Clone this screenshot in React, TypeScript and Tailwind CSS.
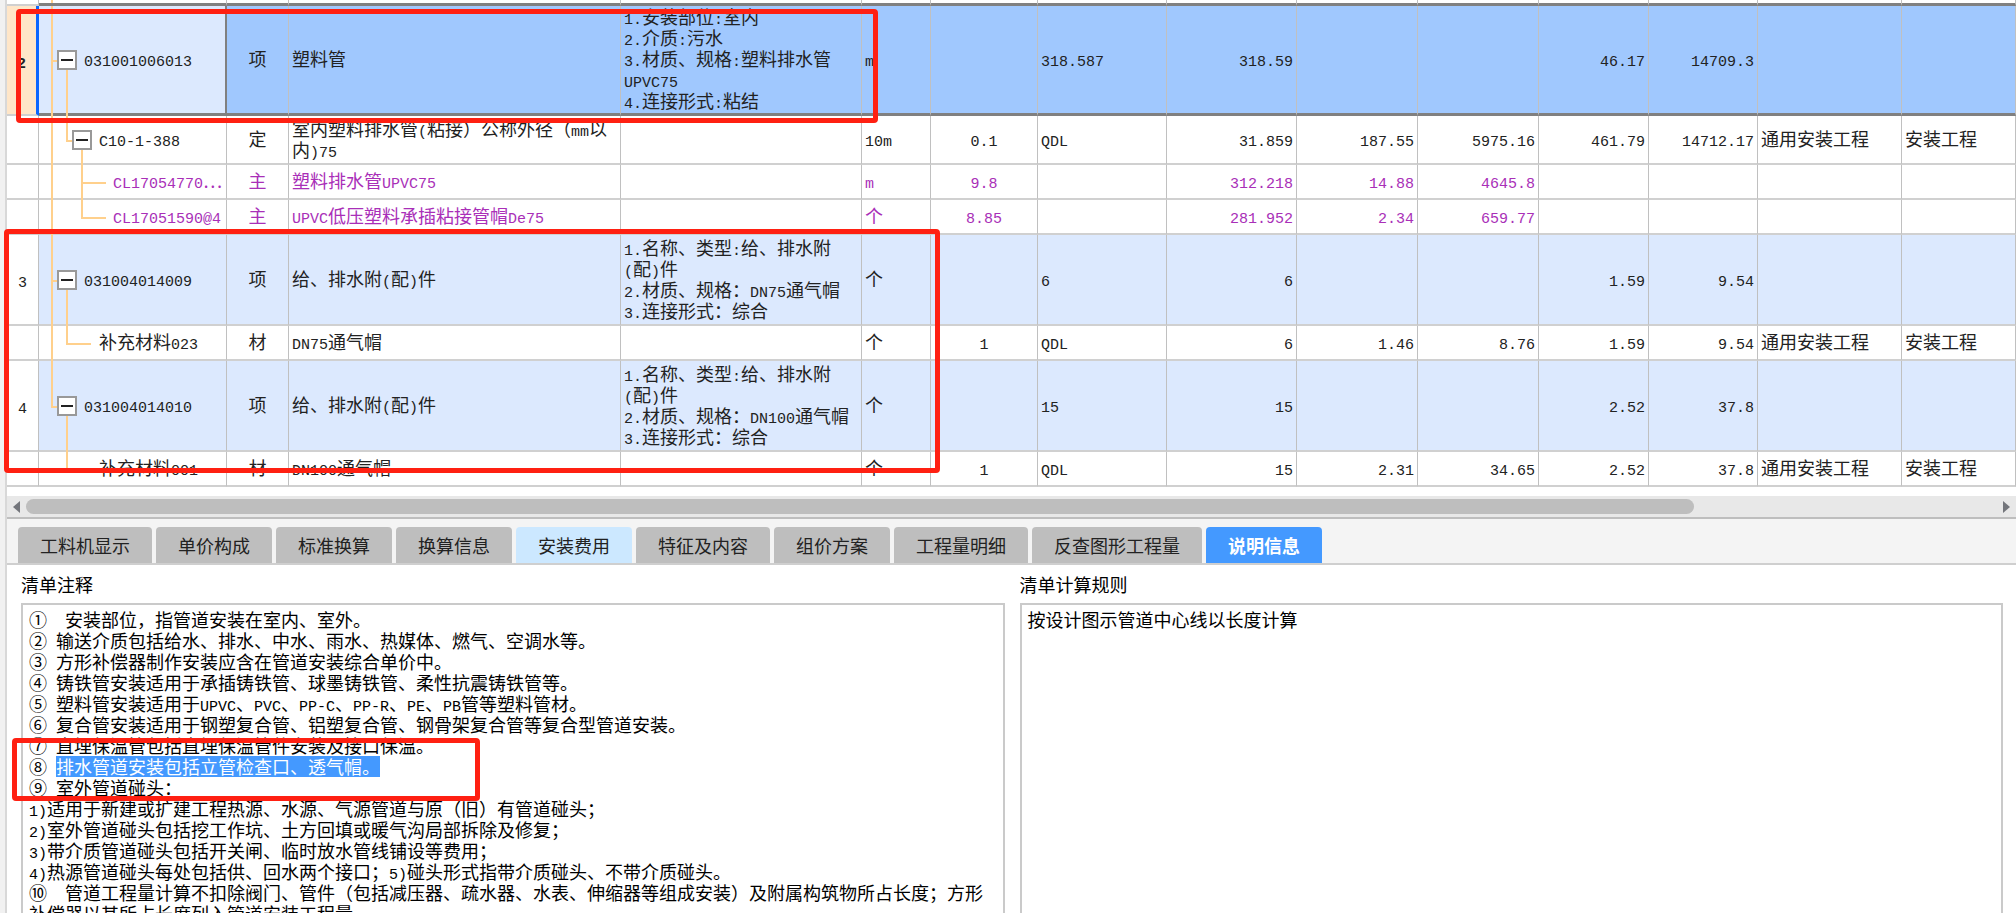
import { useState } from 'react';
import clsx from 'clsx';

type RowKind = 'selected' | 'list' | 'quota' | 'material';

interface BillRow {
  index: string;
  level: 1 | 2 | 3;
  expandable: boolean;
  code: string;
  type: string;
  name: string;
  feature: string;
  unit: string;
  content: string;
  expression: string;
  quantity: string;
  price: string;
  total: string;
  unitPrice: string;
  totalPrice: string;
  profession: string;
  category: string;
  kind: RowKind;
  height: string;
}

const rows: BillRow[] = [
  {
    index: '2', level: 1, expandable: true, code: '031001006013', type: '项', name: '塑料管',
    feature: '1.安装部位:室内\n2.介质:污水\n3.材质、规格:塑料排水管\nUPVC75\n4.连接形式:粘结',
    unit: 'm', content: '', expression: '318.587', quantity: '318.59', price: '', total: '',
    unitPrice: '46.17', totalPrice: '14709.3', profession: '', category: '', kind: 'selected', height: 'h-[110px]',
  },
  {
    index: '', level: 2, expandable: true, code: 'C10-1-388', type: '定',
    name: '室内塑料排水管(粘接）公称外径（mm以\n内)75', feature: '',
    unit: '10m', content: '0.1', expression: 'QDL', quantity: '31.859', price: '187.55', total: '5975.16',
    unitPrice: '461.79', totalPrice: '14712.17', profession: '通用安装工程', category: '安装工程', kind: 'quota', height: 'h-[49px]',
  },
  {
    index: '', level: 3, expandable: false, code: 'CL17054770⋯', type: '主', name: '塑料排水管UPVC75', feature: '',
    unit: 'm', content: '9.8', expression: '', quantity: '312.218', price: '14.88', total: '4645.8',
    unitPrice: '', totalPrice: '', profession: '', category: '', kind: 'material', height: 'h-[35px]',
  },
  {
    index: '', level: 3, expandable: false, code: 'CL17051590@4', type: '主', name: 'UPVC低压塑料承插粘接管帽De75', feature: '',
    unit: '个', content: '8.85', expression: '', quantity: '281.952', price: '2.34', total: '659.77',
    unitPrice: '', totalPrice: '', profession: '', category: '', kind: 'material', height: 'h-[35px]',
  },
  {
    index: '3', level: 1, expandable: true, code: '031004014009', type: '项', name: '给、排水附(配)件',
    feature: '1.名称、类型:给、排水附\n(配)件\n2.材质、规格：DN75通气帽\n3.连接形式：综合',
    unit: '个', content: '', expression: '6', quantity: '6', price: '', total: '',
    unitPrice: '1.59', totalPrice: '9.54', profession: '', category: '', kind: 'list', height: 'h-[91px]',
  },
  {
    index: '', level: 2, expandable: false, code: '补充材料023', type: '材', name: 'DN75通气帽', feature: '',
    unit: '个', content: '1', expression: 'QDL', quantity: '6', price: '1.46', total: '8.76',
    unitPrice: '1.59', totalPrice: '9.54', profession: '通用安装工程', category: '安装工程', kind: 'quota', height: 'h-[35px]',
  },
  {
    index: '4', level: 1, expandable: true, code: '031004014010', type: '项', name: '给、排水附(配)件',
    feature: '1.名称、类型:给、排水附\n(配)件\n2.材质、规格：DN100通气帽\n3.连接形式：综合',
    unit: '个', content: '', expression: '15', quantity: '15', price: '', total: '',
    unitPrice: '2.52', totalPrice: '37.8', profession: '', category: '', kind: 'list', height: 'h-[91px]',
  },
  {
    index: '', level: 2, expandable: false, code: '补充材料001', type: '材', name: 'DN100通气帽', feature: '',
    unit: '个', content: '1', expression: 'QDL', quantity: '15', price: '2.31', total: '34.65',
    unitPrice: '2.52', totalPrice: '37.8', profession: '通用安装工程', category: '安装工程', kind: 'quota', height: 'h-[35px]',
  },
];

const tabs = ['工料机显示', '单价构成', '标准换算', '换算信息', '安装费用', '特征及内容', '组价方案', '工程量明细', '反查图形工程量', '说明信息'];

const notes = [
  '①  安装部位，指管道安装在室内、室外。',
  '② 输送介质包括给水、排水、中水、雨水、热媒体、燃气、空调水等。',
  '③ 方形补偿器制作安装应含在管道安装综合单价中。',
  '④ 铸铁管安装适用于承插铸铁管、球墨铸铁管、柔性抗震铸铁管等。',
  '⑤ 塑料管安装适用于UPVC、PVC、PP-C、PP-R、PE、PB管等塑料管材。',
  '⑥ 复合管安装适用于钢塑复合管、铝塑复合管、钢骨架复合管等复合型管道安装。',
  '⑦ 直埋保温管包括直埋保温管件安装及接口保温。',
  '⑧ 排水管道安装包括立管检查口、透气帽。',
  '⑨ 室外管道碰头：',
  '1)适用于新建或扩建工程热源、水源、气源管道与原（旧）有管道碰头；',
  '2)室外管道碰头包括挖工作坑、土方回填或暖气沟局部拆除及修复；',
  '3)带介质管道碰头包括开关闸、临时放水管线铺设等费用；',
  '4)热源管道碰头每处包括供、回水两个接口；5)碰头形式指带介质碰头、不带介质碰头。',
  '⑩  管道工程量计算不扣除阀门、管件（包括减压器、疏水器、水表、伸缩器等组成安装）及附属构筑物所占长度；方形补偿器以其所占长度列入管道安装工程量。',
];
const selectedNote = 7;

// Half-width runs are set in a monospace face so that two of them span one CJK character
const Mixed = ({ text }: { text: string }) => (
  <>
    {text.split(/([\x20-\x7e]+)/).map((part, i) =>
      i % 2 === 1 ? (
        <span key={i} className="font-['Liberation_Mono',monospace] text-[15px] leading-[0px]">{part}</span>
      ) : (
        part
      )
    )}
  </>
);

const treeIndent = { 1: 'pl-[45px]', 2: 'pl-[60px]', 3: 'pl-[74px]' };
const toggleLeft = { 1: 'left-[18px]', 2: 'left-[33px]', 3: 'left-[48px]' };

const Line = ({ className }: { className: string }) => (
  <span className={clsx('absolute bg-[#ffd08c]', className)} />
);

const TreeCell = ({ row, position }: { row: BillRow; position: number }) => {
  const lastChild = position === 3;

  return (
    <>
      {/* trunk */}
      {position < 6 && <Line className="left-[12px] top-0 -bottom-[3px] w-[2px]" />}
      {position === 6 && <Line className="left-[12px] top-0 h-1/2 w-[2px]" />}
      {row.level === 1 && <Line className="left-[12px] top-1/2 h-[2px] w-[6px]" />}
      {row.level === 1 && <Line className="left-[27px] top-1/2 -bottom-[3px] w-[2px]" />}
      {row.level === 2 && <Line className="left-[27px] top-0 h-1/2 w-[2px]" />}
      {row.level === 2 && (
        <Line className={clsx('left-[27px] top-1/2 h-[2px]', row.expandable ? 'w-[6px]' : 'w-[25px]')} />
      )}
      {row.level === 2 && row.expandable && <Line className="left-[42px] top-1/2 -bottom-[2px] w-[2px]" />}
      {row.level === 3 && (
        <Line className={clsx('left-[42px] top-0 w-[2px]', lastChild ? 'h-1/2' : '-bottom-[2px]')} />
      )}
      {row.level === 3 && <Line className="left-[42px] top-1/2 h-[2px] w-[25px]" />}
      {row.expandable && (
        <button
          type="button"
          aria-label="折叠"
          className={clsx(
            'absolute top-1/2 flex size-5 -translate-y-1/2 items-center justify-center border-2 border-[#999] bg-white',
            toggleLeft[row.level]
          )}
        >
          <span className="h-[2px] w-3 bg-[#222]" />
        </button>
      )}
      <div className={clsx('whitespace-nowrap', treeIndent[row.level])}>
        <Mixed text={row.code} />
      </div>
    </>
  );
};

const BillTable = () => (
  <table className="w-full table-fixed border-separate border-spacing-0 text-[18px] leading-[21px] text-[#222]">
    <colgroup>
      <col className="w-[32px]" />
      <col className="w-[188px]" />
      <col className="w-[62px]" />
      <col className="w-[332px]" />
      <col className="w-[241px]" />
      <col className="w-[69px]" />
      <col className="w-[107px]" />
      <col className="w-[129px]" />
      <col className="w-[130px]" />
      <col className="w-[121px]" />
      <col className="w-[121px]" />
      <col className="w-[110px]" />
      <col className="w-[109px]" />
      <col className="w-[144px]" />
      <col />
    </colgroup>
    <tbody>
      <tr>
        {Array.from({ length: 15 }, (_, i) => (
          <td
            key={i}
            className={clsx(
              'relative h-[6px] border-r border-r-[#c0c0c0]',
              i === 0 ? 'border-b-2 border-b-[#d0d0d0]' : 'border-b-3 border-b-[#808080]'
            )}
          >
            {i === 1 && <Line className="left-[12px] top-0 bottom-0 w-[2px]" />}
          </td>
        ))}
      </tr>
      {rows.map((row, i) => {
        const selected = row.kind === 'selected';
        const cell = clsx(
          'border-r border-r-[#c0c0c0] whitespace-pre px-[3px] pb-[2px]',
          selected ? 'border-b-3 border-b-[#808080] bg-[#a0c8fe]' : 'border-b-2 border-b-[#d0d0d0]',
          row.kind === 'list' && 'bg-[#dce9fe]'
        );
        return (
          <tr key={i} className={clsx(row.kind === 'material' && 'text-[#a92fb8]')}>
            <td
              className={clsx(
                'border-b-2 border-b-[#d0d0d0] text-center',
                row.height,
                selected ? 'border-r-3 border-r-[#0a66ff] bg-[#ffe6c8] font-bold' : 'border-r border-r-[#c0c0c0]'
              )}
            >
              <Mixed text={row.index} />
            </td>
            <td
              className={clsx(
                'relative pb-[2px]',
                selected
                  ? 'border-r-2 border-b-3 border-[#808080] bg-[#dce9fe]'
                  : 'border-r border-b-2 border-r-[#c0c0c0] border-b-[#d0d0d0]',
                row.kind === 'list' && 'bg-[#dce9fe]'
              )}
            >
              <TreeCell row={row} position={i} />
            </td>
            <td className={clsx(cell, 'text-center')}>{row.type}</td>
            <td className={cell}><Mixed text={row.name} /></td>
            <td className={cell}><Mixed text={row.feature} /></td>
            <td className={cell}><Mixed text={row.unit} /></td>
            <td className={clsx(cell, 'text-center')}><Mixed text={row.content} /></td>
            <td className={cell}><Mixed text={row.expression} /></td>
            <td className={clsx(cell, 'text-right')}><Mixed text={row.quantity} /></td>
            <td className={clsx(cell, 'text-right')}><Mixed text={row.price} /></td>
            <td className={clsx(cell, 'text-right')}><Mixed text={row.total} /></td>
            <td className={clsx(cell, 'text-right')}><Mixed text={row.unitPrice} /></td>
            <td className={clsx(cell, 'text-right')}><Mixed text={row.totalPrice} /></td>
            <td className={cell}>{row.profession}</td>
            <td className={cell}>{row.category}</td>
          </tr>
        );
      })}
    </tbody>
  </table>
);

const ScrollBar = () => (
  <div className="mt-[9px] flex h-[21px] shrink-0 items-center gap-[6px] bg-[#e8e8e8] px-[6px]">
    <button type="button" aria-label="向左滚动">
      <svg width="7" height="12" viewBox="0 0 7 12"><path d="M7 0v12L0 6z" fill="#73757b" /></svg>
    </button>
    <div className="h-[15px] flex-1">
      <div className="h-full w-[calc(100%-303px)] rounded-full bg-[#bebebe]" />
    </div>
    <button type="button" aria-label="向右滚动">
      <svg width="7" height="12" viewBox="0 0 7 12"><path d="M0 0v12l7-6z" fill="#73757b" /></svg>
    </button>
  </div>
);

const Mark = ({ className }: { className: string }) => (
  <div className={clsx('pointer-events-none absolute rounded-sm border-5 border-[#ff2012]', className)} />
);

export default function App() {
  const [activeTab, setActiveTab] = useState('说明信息');

  return (
    <div className="relative flex h-screen overflow-hidden bg-white font-['Noto_Sans_CJK_SC',sans-serif]">
      <div className="w-[7px] shrink-0 border-r-2 border-[#d8d8d8] bg-[#f1f1f1]" />
      <main className="flex min-w-0 flex-1 flex-col">
        <BillTable />
        <ScrollBar />
        <div className="flex h-[48px] shrink-0 items-end gap-1 border-t-2 border-b-2 border-t-[#bebebe] border-b-[#cfcfcf] bg-[#f4f4f4] pl-[11px]">
          {tabs.map((tab) => (
            <button
              key={tab}
              type="button"
              onClick={() => setActiveTab(tab)}
              className={clsx(
                'h-9 rounded-t-sm px-[22px] text-[18px] leading-9',
                tab === activeTab
                  ? 'bg-[#4499ff] font-bold text-white'
                  : tab === '安装费用'
                    ? 'bg-[#cce8ff] text-[#222]'
                    : 'bg-[#bebebe] text-[#222]'
              )}
            >
              {tab}
            </button>
          ))}
        </div>
        <div className="grid min-h-0 flex-1 grid-cols-2 gap-[15px] pr-[13px] pl-[14px] text-[18px] leading-[21px] text-black">
          <section className="flex min-h-0 min-w-0 flex-col">
            <h2 className="py-2 leading-[22px]">清单注释</h2>
            <div className="min-h-0 flex-1 overflow-hidden border-2 border-b-0 border-[#cacaca] py-1 px-[6px] whitespace-pre-wrap">
              {notes.map((note, i) => (
                <p key={i}>
                  {i === selectedNote ? (
                    <>
                      <Mixed text={note.slice(0, 2)} />
                      <span className="inline-block bg-[#4499ff] align-top text-white">{note.slice(2)}</span>
                    </>
                  ) : (
                    <Mixed text={note} />
                  )}
                </p>
              ))}
            </div>
          </section>
          <section className="flex min-h-0 min-w-0 flex-col">
            <h2 className="py-2 leading-[22px]">清单计算规则</h2>
            <div className="min-h-0 flex-1 overflow-hidden border-2 border-b-0 border-[#cacaca] py-1 px-[6px]">
              按设计图示管道中心线以长度计算
            </div>
          </section>
        </div>
      </main>

      {/* review marks */}
      <Mark className="top-[9px] left-[16px] h-[114px] w-[862px]" />
      <Mark className="top-[229px] left-[4px] h-[244px] w-[936px]" />
      <Mark className="top-[738px] left-[12px] h-[63px] w-[468px]" />
    </div>
  );
}
